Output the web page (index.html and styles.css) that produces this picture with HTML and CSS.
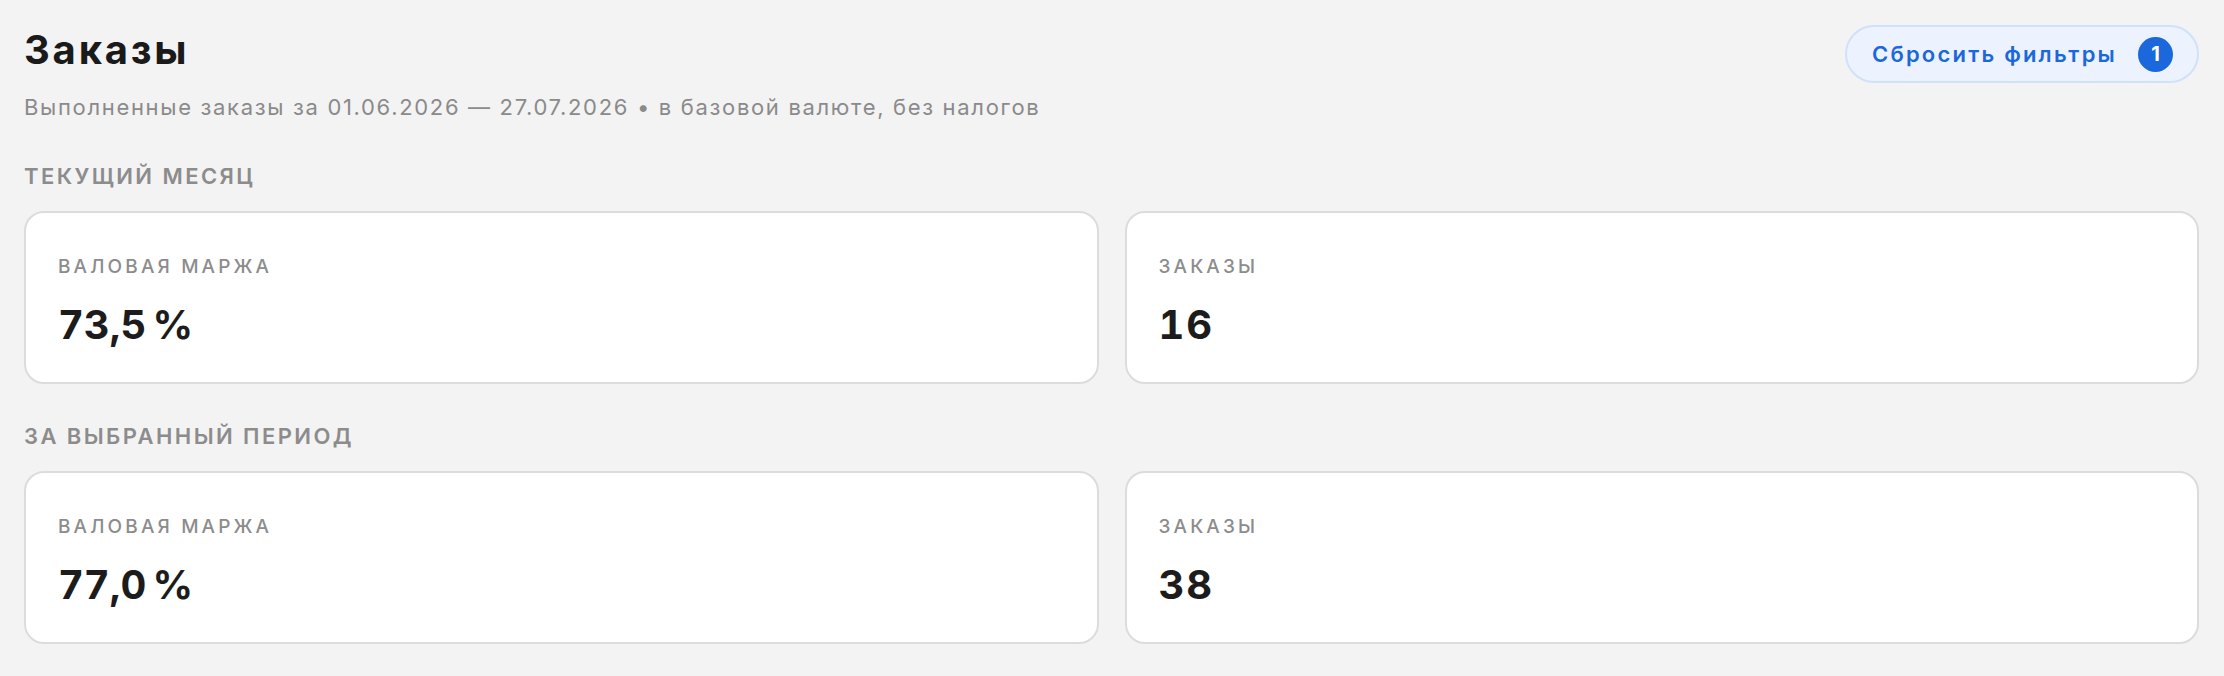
FILE: index.html
```html
<!DOCTYPE html>
<html lang="ru">
<head>
    <meta charset="UTF-8">
    <meta name="viewport" content="width=device-width, initial-scale=1.0">
    <title>Заказы</title>
    <link rel="stylesheet" href="styles.css">
</head>
<body>

    <!-- Header -->
    <header class="page-header">
        <div class="heading">
            <h1>Заказы</h1>
            <p class="subtitle">Выполненные заказы за 01.06.2026 — 27.07.2026 • в базовой валюте, без налогов</p>
        </div>
        <button class="reset-btn" type="button">
            <span>Сбросить фильтры</span>
            <span class="badge">1</span>
        </button>
    </header>

    <!-- Current month -->
    <section class="section">
        <h2 class="section-title">Текущий месяц</h2>
        <div class="cards">
            <div class="card">
                <div class="card-label">Валовая маржа</div>
                <div class="card-value">73,5&#8239;%</div>
            </div>
            <div class="card">
                <div class="card-label">Заказы</div>
                <div class="card-value">16</div>
            </div>
        </div>
    </section>

    <!-- Selected period -->
    <section class="section">
        <h2 class="section-title">За выбранный период</h2>
        <div class="cards">
            <div class="card">
                <div class="card-label">Валовая маржа</div>
                <div class="card-value">77,0&#8239;%</div>
            </div>
            <div class="card">
                <div class="card-label">Заказы</div>
                <div class="card-value">38</div>
            </div>
        </div>
    </section>

</body>
</html>
```

FILE: styles.css
```css
/* Base */
* {
    box-sizing: border-box;
}
body {
    margin: 0;
    padding: 25px 25px 0 24px;
    font-family: Inter, "Noto Sans", sans-serif;
    background-color: #f3f3f3;
    color: #1c1c1c;
}

/* Header */
.page-header {
    display: flex;
    justify-content: space-between;
    align-items: flex-start;
}
.page-header h1 {
    margin: 1px 0 0;
    font-size: 40px;
    line-height: 48px;
    font-weight: 700;
    letter-spacing: 0.07em;
    color: #1a1a1a;
}
.subtitle {
    margin: 19px 0 0;
    font-size: 22px;
    line-height: 28px;
    letter-spacing: 0.076em;
    color: #8a8a8a;
}
.reset-btn {
    display: flex;
    align-items: center;
    gap: 21px;
    height: 58px;
    padding: 0 24px 0 25px;
    border: 2px solid #d0e1fb;
    border-radius: 29px;
    background-color: #edf3fe;
    color: #1b68dc;
    font-family: inherit;
    font-size: 22px;
    font-weight: 600;
    letter-spacing: 0.1em;
    cursor: pointer;
}
.badge {
    display: flex;
    align-items: center;
    justify-content: center;
    width: 35px;
    height: 35px;
    border-radius: 50%;
    background-color: #1b68dc;
    color: white;
    font-size: 20px;
    font-weight: 700;
    letter-spacing: 0;
}

/* Sections */
.section {
    margin-top: 41px;
}
.section + .section {
    margin-top: 38px;
}
.section-title {
    margin: 0 0 21px;
    font-size: 22px;
    line-height: 28px;
    font-weight: 600;
    letter-spacing: 0.11em;
    text-transform: uppercase;
    color: #8c8c8c;
}
.cards {
    display: grid;
    grid-template-columns: 1fr 1fr;
    gap: 26px;
}
.card {
    padding: 42px 32px 33px;
    background-color: white;
    border: 2px solid #dcdcdc;
    border-radius: 20px;
}
.card-label {
    font-size: 19px;
    line-height: 24px;
    font-weight: 500;
    letter-spacing: 0.165em;
    text-transform: uppercase;
    color: #8c8c8c;
}
.card-value {
    margin-top: 22px;
    font-size: 40px;
    line-height: 48px;
    font-weight: 700;
    letter-spacing: 0.05em;
    font-variant-numeric: tabular-nums;
    color: #1c1c1c;
}
```
